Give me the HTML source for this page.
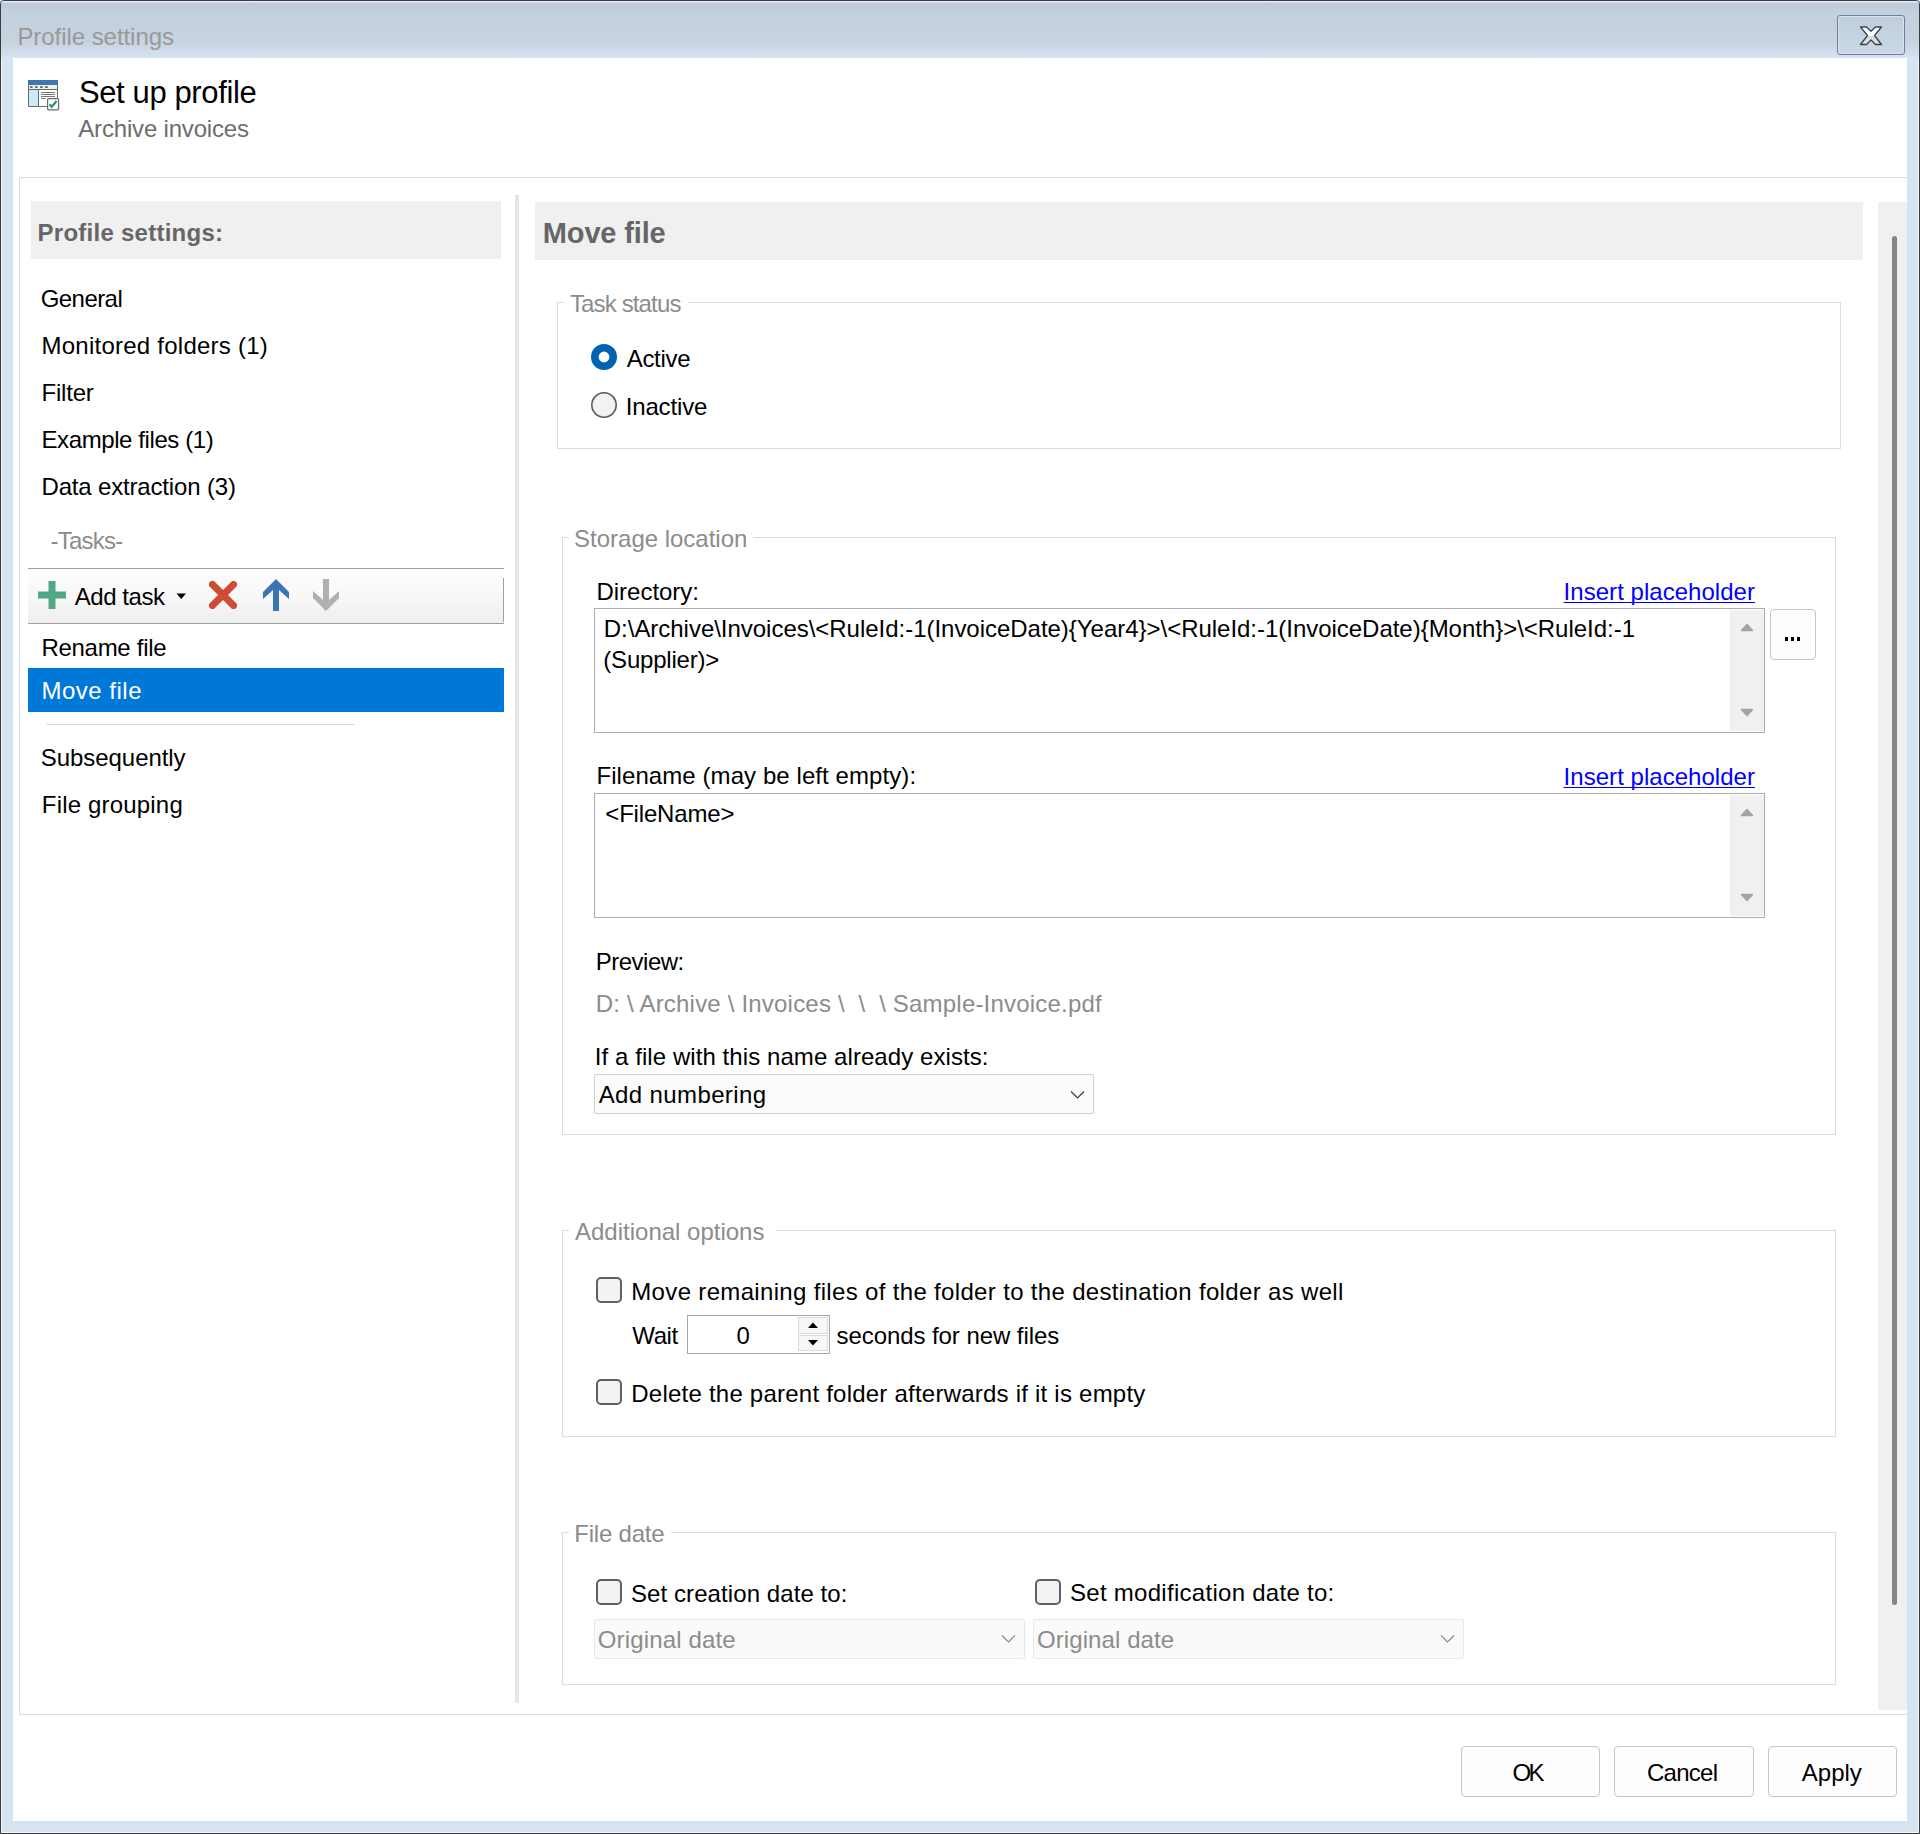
<!DOCTYPE html>
<html><head><meta charset="utf-8">
<style>
html,body{margin:0;padding:0;width:1920px;height:1834px;overflow:hidden;background:#d6e3f0;}
body{font-family:"Liberation Sans",sans-serif;font-size:24px;color:#000;position:relative;}
.a{position:absolute;}
.t{position:absolute;white-space:pre;}
#frame{position:absolute;left:0;top:0;width:1920px;height:1834px;box-sizing:border-box;border:1px solid #3c3c3c;box-shadow:inset 0 0 0 1px #eef5fc;border-radius:4px 4px 0 0;background:#d6e3f0;}
#titlebar{position:absolute;left:1px;top:1px;width:1918px;height:57px;border-radius:3px 3px 0 0;background:linear-gradient(#e6edf5 0,#e6edf5 1px,#bdcbda 2px,#c3d0dd 12px,#c7d3df 40px,#d1deeb 52px,#d6e3f0 57px);}
#client{position:absolute;left:13px;top:58px;width:1894px;height:1763px;background:#fff;}
.hdr{position:absolute;background:#f0f0f0;}
.grp{position:absolute;border:1px solid #dcdcdc;box-sizing:border-box;}
.gap{position:absolute;background:#fff;height:5px;}
.tb{position:absolute;background:#fff;border:1px solid #abadb3;box-sizing:border-box;}
.btn{position:absolute;background:#fdfdfd;border:1px solid #c6c6c6;border-radius:4px;box-sizing:border-box;}
.chk{position:absolute;width:26px;height:26px;box-sizing:border-box;border:2px solid #606060;border-radius:5px;background:#f3f3f3;}
</style></head><body>
<div id="frame"></div>
<div id="titlebar"></div>
<!-- close button -->
<div class="a" style="left:1837px;top:15px;width:68px;height:40px;box-sizing:border-box;border:1px solid #6f7f99;border-radius:3px;box-shadow:inset 0 0 0 1px #d9e3ee;background:linear-gradient(#bfcddc,#c6d3e0 60%,#cbd8e6);"></div>
<svg class="a" style="left:1859px;top:26px" width="24" height="20" viewBox="0 0 24 20">
<defs><linearGradient id="xg" x1="0" y1="0" x2="0" y2="1"><stop offset="0.5" stop-color="#ffffff"/><stop offset="0.5" stop-color="#dcdcdc"/></linearGradient></defs>
<path d="M1.5 1 L7.5 1 L12 5.2 L16.5 1 L22.5 1 L15.5 9.5 L22.5 18.5 L16.5 18.5 L12 14 L7.5 18.5 L1.5 18.5 L8.5 9.5 Z" fill="url(#xg)" stroke="#3b4353" stroke-width="1.3" stroke-linejoin="round"/>
</svg>
<div id="client"></div>

<!-- header icon -->
<svg class="a" style="left:28px;top:80px" width="32" height="31" viewBox="0 0 32 31">
<rect x="0.5" y="4.5" width="29" height="22" fill="#fff" stroke="#6a6a6a" stroke-width="1"/>
<rect x="0" y="0" width="30" height="5" fill="#3d78b5"/>
<rect x="1" y="5" width="28" height="4" fill="#f0f0f0"/>
<rect x="2" y="6.3" width="2.6" height="1.5" fill="#505050"/><rect x="7" y="6.3" width="2.6" height="1.5" fill="#505050"/><rect x="12" y="6.3" width="2.8" height="1.5" fill="#505050"/><rect x="17" y="6.3" width="2.8" height="1.5" fill="#505050"/>
<line x1="1" y1="9.5" x2="29" y2="9.5" stroke="#6a6a6a"/>
<rect x="1" y="10" width="9.5" height="16" fill="#cde9fa"/>
<line x1="10.5" y1="10" x2="10.5" y2="26" stroke="#6a6a6a"/>
<line x1="13" y1="12.5" x2="27" y2="12.5" stroke="#7a7a7a"/><line x1="13" y1="14.5" x2="27" y2="14.5" stroke="#7a7a7a"/><line x1="13" y1="16.5" x2="27" y2="16.5" stroke="#7a7a7a"/><line x1="13" y1="18.5" x2="17.5" y2="18.5" stroke="#7a7a7a"/>
<rect x="19.6" y="18.6" width="11" height="11.2" rx="1" fill="#fff" stroke="#6a6a6a" stroke-width="1.2"/>
<path d="M21.6 24.2 L23.8 26.8 L28.6 21" fill="none" stroke="#1f9a6a" stroke-width="2.2"/>
</svg>

<!-- outer panel -->
<div class="a" style="left:19px;top:177px;width:1888px;height:1538px;box-sizing:border-box;border:1px solid #dcdcdc;border-right:none;"></div>

<!-- LEFT PANE -->
<div class="hdr" style="left:31px;top:201px;width:470px;height:58px;"></div>

<!-- toolbar -->
<div class="a" style="left:28px;top:568px;width:476px;height:56px;box-sizing:border-box;border-top:1px solid #a0a0a0;border-bottom:1px solid #a0a0a0;background:linear-gradient(#fdfdfd,#f8f8f8 50%,#eeeeee);"></div>
<div class="a" style="left:503px;top:578px;width:1px;height:44px;background:#a0a0a0;"></div>
<svg class="a" style="left:38px;top:581px" width="28" height="28" viewBox="0 0 28 28"><path d="M10.5 0 H17.5 V10.5 H28 V17.5 H17.5 V28 H10.5 V17.5 H0 V10.5 H10.5 Z" fill="#52a784"/></svg>
<svg class="a" style="left:176px;top:593px" width="11" height="7" viewBox="0 0 11 7"><path d="M0.5 0.5 H10 L5.25 6 Z" fill="#000"/></svg>
<svg class="a" style="left:209px;top:581px" width="28" height="28" viewBox="0 0 28 28"><path d="M3.5 3.5 L24.5 24.5 M24.5 3.5 L3.5 24.5" stroke="#d14a33" stroke-width="7" stroke-linecap="square"/></svg>
<svg class="a" style="left:263px;top:579px" width="26" height="33" viewBox="0 0 26 33"><path d="M13 0 L26 13 V20 L16 11 V32 H10 V11 L0 20 V13 Z" fill="#3b75b1"/></svg>
<svg class="a" style="left:313px;top:579px" width="26" height="33" viewBox="0 0 26 33"><path d="M13 32 L26 19 V12 L16 21 V0 H10 V21 L0 12 V19 Z" fill="#b0b0b0"/></svg>

<div class="a" style="left:28px;top:668px;width:476px;height:44px;background:#0078d7;"></div>
<div class="a" style="left:47px;top:724px;width:307px;height:1px;background:#d0d0d0;"></div>

<!-- vertical splitter -->
<div class="a" style="left:515px;top:195px;width:4px;height:1508px;background:#e6e6e6;"></div>

<!-- RIGHT PANE -->
<div class="hdr" style="left:535px;top:202px;width:1328px;height:58px;"></div>

<!-- scrollbar -->
<div class="a" style="left:1878px;top:202px;width:29px;height:1508px;background:#f0f0f0;"></div>
<div class="a" style="left:1892px;top:236px;width:5px;height:1369px;background:#858585;border-radius:3px;"></div>

<!-- Task status -->
<div class="grp" style="left:557px;top:302px;width:1284px;height:147px;"></div>
<div class="gap" style="left:564px;top:300px;width:124px;"></div>
<svg class="a" style="left:590px;top:343px" width="28" height="28" viewBox="0 0 28 28"><circle cx="14" cy="14" r="9.2" fill="#fff" stroke="#0063b1" stroke-width="7.6"/></svg>
<svg class="a" style="left:590px;top:391px" width="28" height="28" viewBox="0 0 28 28"><circle cx="14" cy="14" r="12.2" fill="#f2f2f2" stroke="#5a5a5a" stroke-width="1.6"/></svg>

<!-- Storage location -->
<div class="grp" style="left:562px;top:537px;width:1274px;height:598px;"></div>
<div class="gap" style="left:569px;top:535px;width:184px;"></div>
<div class="tb" style="left:594px;top:608px;width:1171px;height:125px;"></div>
<div class="a" style="left:1730px;top:610px;width:34px;height:121px;background:#f0f0f0;"></div>
<svg class="a" style="left:1740px;top:622px" width="14" height="10" viewBox="0 0 14 10"><path d="M1.5 8.5 L7 2.5 L12.5 8.5 Z" fill="#a3a3a3" stroke="#a3a3a3" stroke-linejoin="round" stroke-width="1.5"/></svg>
<svg class="a" style="left:1740px;top:708px" width="14" height="10" viewBox="0 0 14 10"><path d="M1.5 1.5 L7 7.5 L12.5 1.5 Z" fill="#a3a3a3" stroke="#a3a3a3" stroke-linejoin="round" stroke-width="1.5"/></svg>
<div class="btn" style="left:1770px;top:609px;width:46px;height:51px;"></div>
<div class="a" style="left:1785px;top:637px;width:3px;height:4px;background:#000;"></div>
<div class="a" style="left:1791px;top:637px;width:3px;height:4px;background:#000;"></div>
<div class="a" style="left:1797px;top:637px;width:3px;height:4px;background:#000;"></div>

<div class="tb" style="left:594px;top:793px;width:1171px;height:125px;"></div>
<div class="a" style="left:1730px;top:795px;width:34px;height:121px;background:#f0f0f0;"></div>
<svg class="a" style="left:1740px;top:807px" width="14" height="10" viewBox="0 0 14 10"><path d="M1.5 8.5 L7 2.5 L12.5 8.5 Z" fill="#a3a3a3" stroke="#a3a3a3" stroke-linejoin="round" stroke-width="1.5"/></svg>
<svg class="a" style="left:1740px;top:893px" width="14" height="10" viewBox="0 0 14 10"><path d="M1.5 1.5 L7 7.5 L12.5 1.5 Z" fill="#a3a3a3" stroke="#a3a3a3" stroke-linejoin="round" stroke-width="1.5"/></svg>

<div class="a" style="left:594px;top:1074px;width:500px;height:40px;box-sizing:border-box;border:1px solid #cfcfcf;border-radius:2px;background:#fcfcfc;"></div>
<svg class="a" style="left:1069px;top:1089px" width="17" height="12" viewBox="0 0 17 12"><path d="M2 2.5 L8.5 9 L15 2.5" fill="none" stroke="#3a3a3a" stroke-width="1.2"/></svg>

<!-- Additional options -->
<div class="grp" style="left:562px;top:1230px;width:1274px;height:207px;"></div>
<div class="gap" style="left:569px;top:1228px;width:207px;"></div>
<div class="chk" style="left:596px;top:1277px;"></div>
<div class="a" style="left:687px;top:1315px;width:143px;height:39px;box-sizing:border-box;border:1px solid #a6a6a6;background:#fff;"></div>
<div class="a" style="left:798px;top:1317px;width:30px;height:17px;box-sizing:border-box;border:1px solid #dadada;background:#f7f7f7;"></div>
<div class="a" style="left:798px;top:1335px;width:30px;height:16px;box-sizing:border-box;border:1px solid #dadada;background:#f7f7f7;"></div>
<svg class="a" style="left:806px;top:1320px" width="14" height="10" viewBox="0 0 14 10"><path d="M2 8 L7 2.5 L12 8 Z" fill="#000"/></svg>
<svg class="a" style="left:806px;top:1338px" width="14" height="10" viewBox="0 0 14 10"><path d="M2 2 L7 7.5 L12 2 Z" fill="#000"/></svg>
<div class="chk" style="left:596px;top:1379px;"></div>

<!-- File date -->
<div class="grp" style="left:562px;top:1532px;width:1274px;height:153px;"></div>
<div class="gap" style="left:569px;top:1530px;width:102px;"></div>
<div class="chk" style="left:596px;top:1579px;"></div>
<div class="chk" style="left:1035px;top:1579px;"></div>
<div class="a" style="left:594px;top:1619px;width:431px;height:40px;box-sizing:border-box;border:1px solid #e8e8e8;border-radius:2px;background:#fafafa;"></div>
<svg class="a" style="left:1000px;top:1633px" width="17" height="12" viewBox="0 0 17 12"><path d="M2 2.5 L8.5 9 L15 2.5" fill="none" stroke="#8a8a8a" stroke-width="1.1"/></svg>
<div class="a" style="left:1033px;top:1619px;width:431px;height:40px;box-sizing:border-box;border:1px solid #e8e8e8;border-radius:2px;background:#fafafa;"></div>
<svg class="a" style="left:1439px;top:1633px" width="17" height="12" viewBox="0 0 17 12"><path d="M2 2.5 L8.5 9 L15 2.5" fill="none" stroke="#8a8a8a" stroke-width="1.1"/></svg>

<!-- bottom buttons -->
<div class="btn" style="left:1461px;top:1746px;width:139px;height:51px;"></div>
<div class="btn" style="left:1614px;top:1746px;width:140px;height:51px;"></div>
<div class="btn" style="left:1768px;top:1746px;width:129px;height:51px;"></div>

<div class="t" style="left:17.40px;top:24.9px;font-size:24px;line-height:24px;color:#999999;letter-spacing:-0.054px;">Profile settings</div>
<div class="t" style="left:78.90px;top:76.8px;font-size:31px;line-height:31px;color:#000;letter-spacing:-0.379px;">Set up profile</div>
<div class="t" style="left:78.30px;top:116.7px;font-size:24px;line-height:24px;color:#6d6d6d;letter-spacing:-0.180px;">Archive invoices</div>
<div class="t" style="left:37.60px;top:220.7px;font-size:24px;line-height:24px;color:#666666;font-weight:700;letter-spacing:0.252px;">Profile settings:</div>
<div class="t" style="left:40.70px;top:286.8px;font-size:24px;line-height:24px;color:#000;letter-spacing:-0.558px;">General</div>
<div class="t" style="left:41.50px;top:334.3px;font-size:24px;line-height:24px;color:#000;letter-spacing:0.243px;">Monitored folders (1)</div>
<div class="t" style="left:41.50px;top:380.9px;font-size:24px;line-height:24px;color:#000;letter-spacing:-0.208px;">Filter</div>
<div class="t" style="left:41.50px;top:427.9px;font-size:24px;line-height:24px;color:#000;letter-spacing:-0.408px;">Example files (1)</div>
<div class="t" style="left:41.50px;top:474.5px;font-size:24px;line-height:24px;color:#000;letter-spacing:-0.168px;">Data extraction (3)</div>
<div class="t" style="left:50.50px;top:528.9px;font-size:24px;line-height:24px;color:#8c8c8c;letter-spacing:-0.757px;">-Tasks-</div>
<div class="t" style="left:74.70px;top:584.5px;font-size:24px;line-height:24px;color:#000;letter-spacing:-0.441px;">Add task</div>
<div class="t" style="left:41.40px;top:635.8px;font-size:24px;line-height:24px;color:#000;letter-spacing:-0.281px;">Rename file</div>
<div class="t" style="left:41.40px;top:679.4px;font-size:24px;line-height:24px;color:#fff;letter-spacing:0.514px;">Move file</div>
<div class="t" style="left:40.80px;top:746.0px;font-size:24px;line-height:24px;color:#000;letter-spacing:-0.058px;">Subsequently</div>
<div class="t" style="left:41.80px;top:793.1px;font-size:24px;line-height:24px;color:#000;letter-spacing:0.183px;">File grouping</div>
<div class="t" style="left:542.80px;top:218.5px;font-size:29px;line-height:29px;color:#666666;font-weight:700;letter-spacing:-0.145px;">Move file</div>
<div class="t" style="left:569.90px;top:291.9px;font-size:24px;line-height:24px;color:#8c8c8c;letter-spacing:-0.855px;">Task status</div>
<div class="t" style="left:626.70px;top:346.8px;font-size:24px;line-height:24px;color:#000;letter-spacing:-0.302px;">Active</div>
<div class="t" style="left:625.70px;top:394.7px;font-size:24px;line-height:24px;color:#000;letter-spacing:-0.152px;">Inactive</div>
<div class="t" style="left:574.10px;top:527.1px;font-size:24px;line-height:24px;color:#8c8c8c;letter-spacing:-0.013px;">Storage location</div>
<div class="t" style="left:596.50px;top:580.2px;font-size:24px;line-height:24px;color:#000;letter-spacing:-0.024px;">Directory:</div>
<div class="t" style="left:1563.60px;top:579.8px;font-size:24px;line-height:24px;color:#0000ff;letter-spacing:0.036px;text-decoration:underline;text-decoration-skip-ink:none;text-decoration-thickness:1.3px;text-underline-offset:2px;">Insert placeholder</div>
<div class="t" style="left:603.80px;top:616.7px;font-size:24px;line-height:24px;color:#000;letter-spacing:-0.027px;">D:\Archive\Invoices\&lt;RuleId:-1(InvoiceDate){Year4}&gt;\&lt;RuleId:-1(InvoiceDate){Month}&gt;\&lt;RuleId:-1</div>
<div class="t" style="left:603.30px;top:648.4px;font-size:24px;line-height:24px;color:#000;letter-spacing:-0.204px;">(Supplier)&gt;</div>
<div class="t" style="left:596.40px;top:764.4px;font-size:24px;line-height:24px;color:#000;letter-spacing:0.080px;">Filename (may be left empty):</div>
<div class="t" style="left:1563.60px;top:764.8px;font-size:24px;line-height:24px;color:#0000ff;letter-spacing:0.036px;text-decoration:underline;text-decoration-skip-ink:none;text-decoration-thickness:1.3px;text-underline-offset:2px;">Insert placeholder</div>
<div class="t" style="left:605.30px;top:801.6px;font-size:24px;line-height:24px;color:#000;letter-spacing:-0.179px;">&lt;FileName&gt;</div>
<div class="t" style="left:595.80px;top:949.9px;font-size:24px;line-height:24px;color:#000;letter-spacing:-0.508px;">Preview:</div>
<div class="t" style="left:595.80px;top:992.2px;font-size:24px;line-height:24px;color:#8c8c8c;letter-spacing:0.197px;">D: \ Archive \ Invoices \  \  \ Sample-Invoice.pdf</div>
<div class="t" style="left:594.80px;top:1045.0px;font-size:24px;line-height:24px;color:#000;letter-spacing:0.073px;">If a file with this name already exists:</div>
<div class="t" style="left:598.70px;top:1082.6px;font-size:24px;line-height:24px;color:#000;letter-spacing:0.381px;">Add numbering</div>
<div class="t" style="left:575.00px;top:1219.7px;font-size:24px;line-height:24px;color:#8c8c8c;">Additional options</div>
<div class="t" style="left:631.30px;top:1280.3px;font-size:24px;line-height:24px;color:#000;letter-spacing:0.333px;">Move remaining files of the folder to the destination folder as well</div>
<div class="t" style="left:632.30px;top:1323.6px;font-size:24px;line-height:24px;color:#000;letter-spacing:-0.414px;">Wait</div>
<div class="t" style="left:736.60px;top:1323.6px;font-size:24px;line-height:24px;color:#000;">0</div>
<div class="t" style="left:836.50px;top:1323.6px;font-size:24px;line-height:24px;color:#000;letter-spacing:-0.070px;">seconds for new files</div>
<div class="t" style="left:631.30px;top:1382.0px;font-size:24px;line-height:24px;color:#000;letter-spacing:0.227px;">Delete the parent folder afterwards if it is empty</div>
<div class="t" style="left:574.30px;top:1521.7px;font-size:24px;line-height:24px;color:#8c8c8c;letter-spacing:-0.225px;">File date</div>
<div class="t" style="left:631.00px;top:1581.7px;font-size:24px;line-height:24px;color:#000;letter-spacing:0.083px;">Set creation date to:</div>
<div class="t" style="left:1070.00px;top:1581.1px;font-size:24px;line-height:24px;color:#000;letter-spacing:0.283px;">Set modification date to:</div>
<div class="t" style="left:597.70px;top:1628.3px;font-size:24px;line-height:24px;color:#8c8c8c;letter-spacing:0.156px;">Original date</div>
<div class="t" style="left:1037.00px;top:1627.9px;font-size:24px;line-height:24px;color:#8c8c8c;letter-spacing:0.089px;">Original date</div>
<div class="t" style="left:1512.50px;top:1760.7px;font-size:24px;line-height:24px;color:#000;letter-spacing:-2.668px;">OK</div>
<div class="t" style="left:1647.00px;top:1760.7px;font-size:24px;line-height:24px;color:#000;letter-spacing:-0.735px;">Cancel</div>
<div class="t" style="left:1801.80px;top:1760.7px;font-size:24px;line-height:24px;color:#000;">Apply</div>
</body></html>
